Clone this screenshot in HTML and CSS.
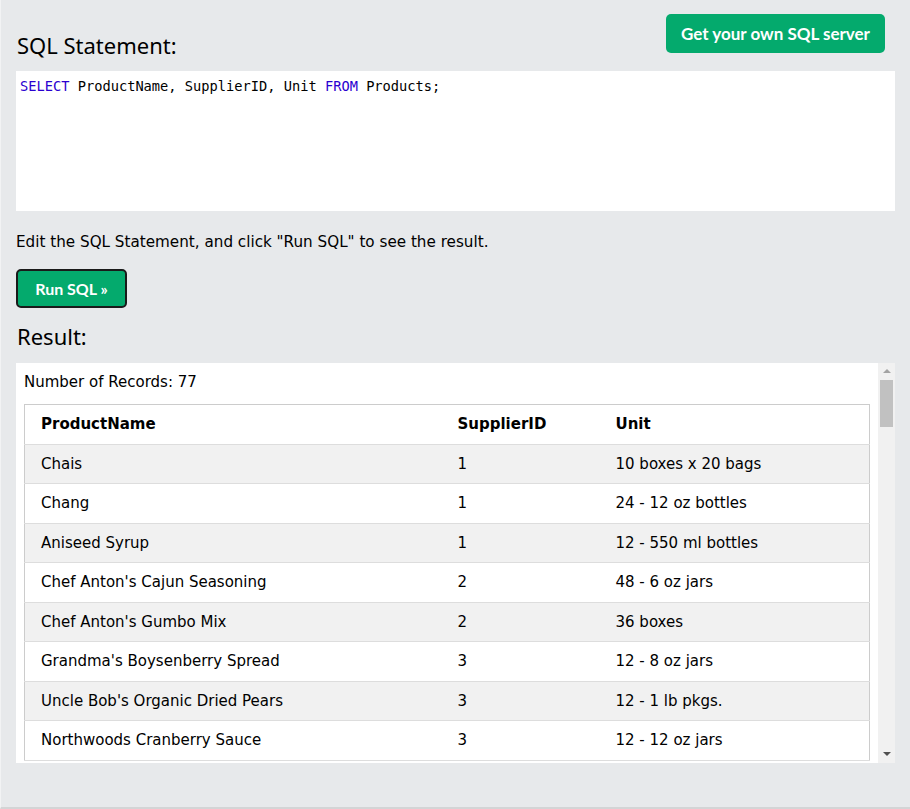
FILE: index.html
```html
<!DOCTYPE html>
<html>
<head>
<meta charset="utf-8">
<link rel="stylesheet" href="styles.css">
</head>
<body>
<div class="page">
  <div class="top">
    <h2 class="heading heading-first">SQL Statement:</h2>
    <a class="btn-server">Get your own SQL server</a>
  </div>
  <div class="editor"><span class="kw">SELECT</span> ProductName, SupplierID, Unit <span class="kw">FROM</span> Products;</div>
  <p class="hint">Edit the SQL Statement, and click "Run SQL" to see the result.</p>
  <button class="btn-run">Run SQL »</button>
  <h2 class="heading heading-result">Result:</h2>
  <div class="result">
    <div class="result-content">
      <div class="count">Number of Records: 77</div>
      <table class="grid">
        <colgroup><col class="c1"><col class="c2"><col class="c3"></colgroup>
        <thead><tr><th>ProductName</th><th>SupplierID</th><th>Unit</th></tr></thead>
        <tbody>
          <tr><td>Chais</td><td>1</td><td>10 boxes x 20 bags</td></tr>
          <tr><td>Chang</td><td>1</td><td>24 - 12 oz bottles</td></tr>
          <tr><td>Aniseed Syrup</td><td>1</td><td>12 - 550 ml bottles</td></tr>
          <tr><td>Chef Anton's Cajun Seasoning</td><td>2</td><td>48 - 6 oz jars</td></tr>
          <tr><td>Chef Anton's Gumbo Mix</td><td>2</td><td>36 boxes</td></tr>
          <tr><td>Grandma's Boysenberry Spread</td><td>3</td><td>12 - 8 oz jars</td></tr>
          <tr><td>Uncle Bob's Organic Dried Pears</td><td>3</td><td>12 - 1 lb pkgs.</td></tr>
          <tr><td>Northwoods Cranberry Sauce</td><td>3</td><td>12 - 12 oz jars</td></tr>
        </tbody>
      </table>
    </div>
    <div class="scrollbar">
      <div class="arrow-up"></div>
      <div class="thumb"></div>
      <div class="track-fill"></div>
      <div class="arrow-down"></div>
    </div>
  </div>
</div>
</body>
</html>
```
FILE: styles.css
```css
html, body {
  margin: 0;
  padding: 0;
  background: #e7e9eb;
}
body {
  font-family: "DejaVu Sans", Verdana, sans-serif;
  color: #000;
}
.page {
  box-sizing: border-box;
  height: 809px;
  border-left: 1px solid #f2f3f4;
  border-bottom: 2px solid #d3d4d5;
  padding: 14px 15px 0 15px;
}
.top {
  display: flex;
  justify-content: space-between;
  align-items: flex-start;
  height: 57px;
}
.heading {
  font-family: "Noto Sans", "Open Sans", sans-serif;
  font-weight: normal;
  font-size: 22px;
  line-height: 26px;
  margin: 0;
  padding-left: 1px;
  color: #000;
}
.heading-first {
  margin-top: 18px;
}
.btn-server {
  display: block;
  box-sizing: border-box;
  height: 39px;
  width: 219px;
  margin-right: 10px;
  background: #04aa6d;
  color: #fff;
  border-radius: 5px;
  font-family: "Lato", "Open Sans", sans-serif;
  font-weight: bold;
  font-size: 17px;
  line-height: 39px;
  text-align: center;
}
.editor {
  box-sizing: border-box;
  height: 140px;
  background: #fff;
  padding: 7px 4px;
  font-family: "DejaVu Sans Mono", "Liberation Mono", monospace;
  font-size: 13.7px;
  line-height: 16px;
  white-space: pre;
}
.kw {
  color: #2a00d0;
}
.hint {
  margin: 20px 0 0 0;
  font-size: 15.2px;
  line-height: 22px;
}
.btn-run {
  display: block;
  box-sizing: border-box;
  margin-top: 16px;
  height: 39px;
  width: 111px;
  background: #04aa6d;
  color: #fff;
  border: 2px solid #1a1a1a;
  border-radius: 5px;
  font-family: "Lato", "Open Sans", sans-serif;
  font-weight: bold;
  font-size: 16px;
  padding: 0;
}
.heading-result {
  margin-top: 15px;
}
.result {
  display: flex;
  margin-top: 14px;
  height: 400px;
  background: #fff;
  overflow: hidden;
}
.result-content {
  flex: 1;
  padding: 8px;
  overflow: hidden;
}
.count {
  font-size: 15px;
  line-height: 22px;
}
.grid {
  margin-top: 11px;
  width: 846px;
  border-collapse: collapse;
  border: 1px solid #ccc;
  font-size: 15px;
  table-layout: fixed;
}
.c1 { width: 417px; }
.c2 { width: 158px; }
.grid th, .grid td {
  text-align: left;
  padding: 8px 8px 8px 16px;
  line-height: 22.5px;
  border-bottom: 1px solid #ddd;
  white-space: nowrap;
}
.grid th {
  font-weight: bold;
}
.grid tbody tr:nth-child(odd) {
  background: #f1f1f1;
}
.scrollbar {
  width: 17px;
  background: #f1f1f1;
  display: flex;
  flex-direction: column;
  align-items: center;
}
.arrow-up {
  margin-top: 6px;
  width: 0;
  height: 0;
  border-left: 4px solid transparent;
  border-right: 4px solid transparent;
  border-bottom: 4px solid #a3a3a3;
}
.thumb {
  margin-top: 7px;
  width: 13px;
  height: 47px;
  background: #c1c1c1;
}
.track-fill {
  flex: 1;
}
.arrow-down {
  margin-bottom: 7px;
  width: 0;
  height: 0;
  border-left: 4px solid transparent;
  border-right: 4px solid transparent;
  border-top: 4px solid #505050;
}
```
